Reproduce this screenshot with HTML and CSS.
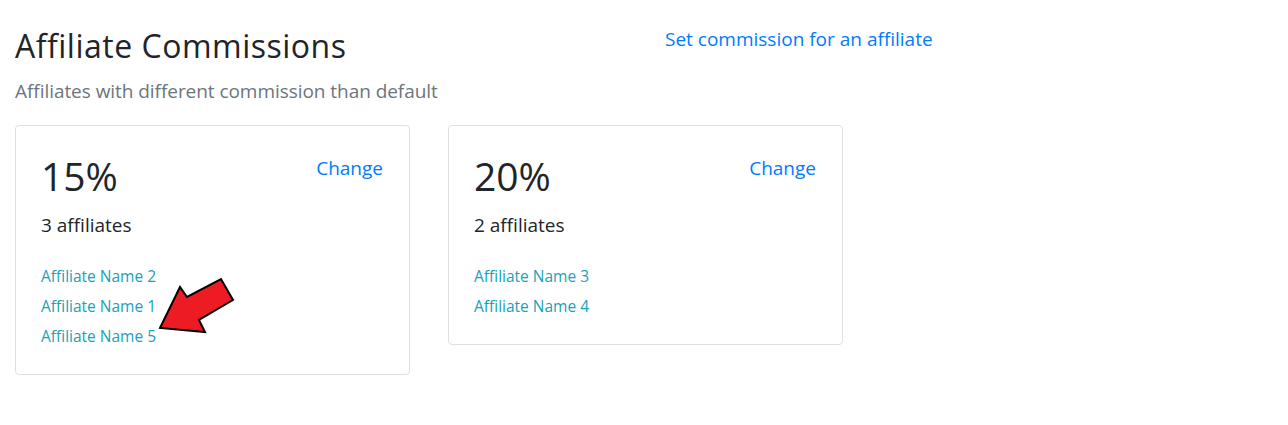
FILE: index.html
```html
<!DOCTYPE html>
<html>
<head>
<meta charset="utf-8">
<link rel="stylesheet" href="styles.css">
</head>
<body>
<div class="page">
  <div class="header">
    <div class="title-col">
      <h2 class="title">Affiliate Commissions</h2>
      <p class="lead">Affiliates with different commission than default</p>
    </div>
    <div class="action-col">
      <a class="set-link" href="#">Set commission for an affiliate</a>
    </div>
  </div>
  <div class="cards">
    <div class="card">
      <div class="card-top">
        <div class="pct">15%</div>
        <a class="change" href="#">Change</a>
      </div>
      <div class="count">3 affiliates</div>
      <ul class="names">
        <li><a href="#">Affiliate Name 2</a></li>
        <li><a href="#">Affiliate Name 1</a></li>
        <li><a href="#">Affiliate Name 5</a></li>
      </ul>
      <svg class="arrow" width="90" height="70" viewBox="150 270 90 70">
        <polygon points="160,328 180,287 187,297 221,279 233,300 199,320 205,332" fill="#ed1c24" stroke="#000" stroke-width="2" stroke-linejoin="miter"/>
      </svg>
    </div>
    <div class="card">
      <div class="card-top">
        <div class="pct">20%</div>
        <a class="change" href="#">Change</a>
      </div>
      <div class="count">2 affiliates</div>
      <ul class="names">
        <li><a href="#">Affiliate Name 3</a></li>
        <li><a href="#">Affiliate Name 4</a></li>
      </ul>
    </div>
  </div>
</div>
</body>
</html>
```
FILE: styles.css
```css
* { box-sizing: border-box; }
html, body { margin: 0; padding: 0; background: #fff; }
body {
  font-family: "Open Sans", "Noto Sans", sans-serif;
  color: #212529;
  -webkit-font-smoothing: antialiased;
}
a { text-decoration: none; }
.page { padding: 24px 15px 0 15px; }
.header { display: flex; }
.title-col { width: 650px; }
.title {
  margin: 0;
  font-size: 32px;
  font-weight: 400;
  line-height: 44px;
  letter-spacing: 0.5px;
}
.lead {
  margin: 8px 0 0 0;
  font-size: 19px;
  line-height: 30px;
  color: #6c757d;
  letter-spacing: -0.05px;
}
.action-col { padding-top: 0; }
.set-link {
  font-size: 19px;
  line-height: 30px;
  color: #007bff;
}
.cards {
  display: flex;
  align-items: flex-start;
  gap: 38px;
  margin-top: 19px;
}
.card {
  position: relative;
  width: 395px;
  border: 1px solid #dfdfdf;
  border-radius: 4px;
  padding: 24px 26px 23px 25px;
}
.card-top {
  display: flex;
  justify-content: space-between;
  align-items: flex-start;
}
.pct {
  font-size: 39px;
  line-height: 52px;
}
.change {
  font-size: 19px;
  line-height: 36px;
  color: #007bff;
}
.count {
  margin-top: 10px;
  font-size: 19px;
  line-height: 26px;
}
.names {
  list-style: none;
  margin: 23px 0 0 0;
  padding: 0;
}
.names li {
  font-size: 15.5px;
  line-height: 30px;
}
.names a { color: #17a2b8; }
.arrow {
  position: absolute;
  left: 134px;
  top: 144px;
  overflow: visible;
}
```
